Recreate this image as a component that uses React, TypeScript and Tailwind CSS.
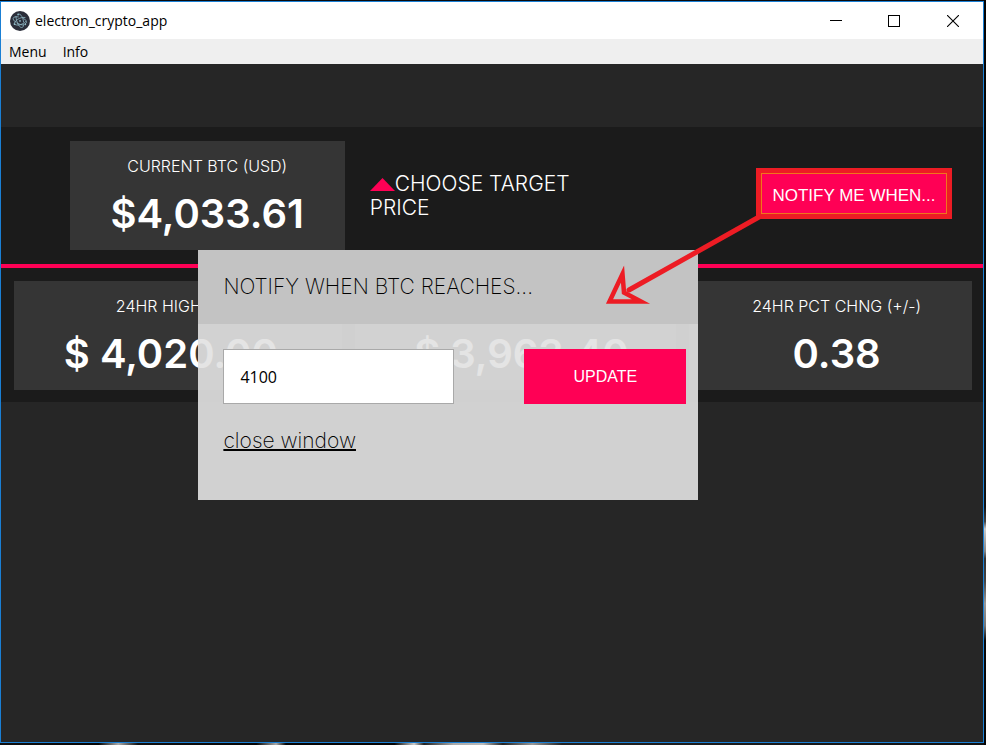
import { useState } from "react";

function ElectronIcon() {
  return (
    <svg viewBox="0 0 20 20" className="size-5" aria-hidden="true">
      <circle cx="10" cy="10" r="10" fill="#2b2e3a" />
      <g fill="none" stroke="#8fb8c4" strokeWidth="0.8" strokeLinecap="round">
        <path d="M8.300 5.900C5.700 5.500 3.700 5.900 3.200 7C2.700 8.100 3.800 9.800 6 11.400" />
        <path d="M7.300 12.200C9.200 13.200 11.300 13.900 13 14.100" />
        <path d="M13 6.800C15.600 8.500 17 10.500 16.400 11.800C16.200 12.200 15.900 12.500 15.400 12.700" />
        <path d="M15 6.500C13.500 6.200 11.500 6.500 9.400 7.400C6.200 8.800 4.300 11 4.200 12.600" />
        <path d="M5.400 13.700C6.900 14.400 9.400 14.200 12 13.100C13.700 12.400 15 11.400 15.900 10.400" />
        <path d="M6 5.400C6 8 6.900 11.600 8.600 14.200C9.800 16 11.200 16.900 12.300 16.400C13.200 16 13.700 14.800 13.800 13.200" />
        <path d="M13.600 11C13.300 8.400 12.300 5.800 11 4.200C10.300 3.400 9.600 3 8.900 3" />
      </g>
      <g fill="#8fb8c4">
        <circle cx="10" cy="9.900" r="0.900" />
        <circle cx="4.600" cy="13.200" r="0.900" />
        <circle cx="15.300" cy="13.300" r="0.900" />
        <circle cx="8.100" cy="3.500" r="0.900" />
      </g>
    </svg>
  );
}

function TitleBar() {
  return (
    <header className="flex h-[37px] items-center bg-white pl-[9px] font-['Open_Sans',sans-serif] text-sm text-black">
      <ElectronIcon />
      <h1 className="ml-[5px]">electron_crypto_app</h1>
      <div className="ml-auto flex h-full">
        <button aria-label="Minimize" className="flex w-[58px] items-center justify-center">
          <svg width="12" height="12" shapeRendering="crispEdges">
            <path d="M0 5.5h12" stroke="#000" />
          </svg>
        </button>
        <button aria-label="Maximize" className="flex w-[58px] items-center justify-center">
          <svg width="12" height="12" shapeRendering="crispEdges">
            <rect x="0.5" y="0.5" width="11" height="11" fill="none" stroke="#000" />
          </svg>
        </button>
        <button aria-label="Close" className="flex w-[60px] items-center justify-center">
          <svg width="12" height="12">
            <path d="M0 0L12 12M12 0L0 12" stroke="#000" strokeWidth="1.1" />
          </svg>
        </button>
      </div>
    </header>
  );
}

function MenuBar() {
  return (
    <nav className="flex h-[25px] items-center gap-4 bg-[#efefef] pl-2 font-['Open_Sans',sans-serif] text-sm text-black">
      <button>Menu</button>
      <button>Info</button>
    </nav>
  );
}

type PriceCardProps = { label: string; value: string; className: string; labelClass?: string };

function PriceCard({ label, value, className, labelClass = "" }: PriceCardProps) {
  return (
    <section className={`bg-[#353535] pt-[13px] text-center text-white ${className}`}>
      <h2 className={`leading-6 font-light whitespace-nowrap ${labelClass}`}>{label}</h2>
      <p className="text-[40px] leading-[72px] font-semibold whitespace-nowrap">{value}</p>
    </section>
  );
}

function NotifyDialog({ onClose }: { onClose: () => void }) {
  const [price, setPrice] = useState("4100");
  return (
    <div
      role="dialog"
      aria-labelledby="notify-title"
      className="absolute top-[186px] left-[20.1%] h-[250px] w-[500px] bg-[rgba(225,225,225,0.915)] text-[21px] font-extralight text-black"
    >
      <h2 id="notify-title" className="bg-[#c3c3c3] px-[25px] py-[25px] leading-6">
        <label htmlFor="target-price">NOTIFY WHEN BTC REACHES...</label>
      </h2>
      <div className="flex justify-between pt-[25px] pr-3 pl-[25px]">
        <input
          id="target-price"
          value={price}
          onChange={(e) => setPrice(e.target.value)}
          className="h-[55px] w-[231px] border border-[#a9a9a9] bg-white px-4 font-['Open_Sans',sans-serif] text-base font-normal"
        />
        <button className="h-[55px] w-[162px] bg-[#ff0055] font-['Liberation_Sans',Arial,sans-serif] text-base font-normal text-white">
          UPDATE
        </button>
      </div>
      <a
        href="#close"
        onClick={(e) => {
          e.preventDefault();
          onClose();
        }}
        className="mt-[25px] ml-[25px] inline-block leading-6 underline decoration-2"
      >
        close window
      </a>
    </div>
  );
}

function CalloutArrow() {
  return (
    <svg
      viewBox="0 0 160 96"
      className="pointer-events-none absolute top-[150px] right-[220px] h-24 w-40"
      fill="none"
      stroke="#ed1c24"
      aria-hidden="true"
    >
      <path d="M156 3L26 76" strokeWidth="5" strokeLinecap="round" />
      <path d="M19.500 60L6.500 87.500H38L21 78.500Z" strokeWidth="4.500" strokeMiterlimit="6" />
    </svg>
  );
}

export default function App() {
  const [open, setOpen] = useState(true);
  return (
    <div className="relative flex min-h-screen flex-col bg-[#0a0a0c] pt-px pr-0.5 pb-0.5">
      <div className="absolute right-0 bottom-0 left-0 h-0.5 bg-[linear-gradient(90deg,#111_0,#050505_10%,#aaa_12%,#111_14%,#050505_26%,#aaa_28%,#050505_29%,#050505_40%,#ccc_42%,#222_43%,#aaa_46%,#bbb_49%,#222_51%,#999_54%,#222_57%,#111_100%)]" />
      <div className="absolute top-0 right-0 bottom-0 w-0.5 bg-[linear-gradient(180deg,#030303_0,#111_68%,#444_70%,#ccc_71%,#888_74%,#333_75%,#444_78%,#999_81%,#777_84%,#080808_86%,#050505_100%)]" />
      <div className="relative flex flex-1 flex-col border border-[#1a7fd4] bg-[#262626]">
        <TitleBar />
        <MenuBar />
        <main className="relative flex-1 pt-[63px] font-[Inter,sans-serif]">
          <div className="flex items-start border-b-4 border-[#ff0055] bg-[#1b1b1b] py-3.5 pl-[7%]">
            <PriceCard label="CURRENT BTC (USD)" value="$4,033.61" className="w-[275px]" />
            <p className="mt-[31px] ml-[25px] w-56 text-[21px] leading-6 font-light text-white">
              <svg width="25" height="13" className="inline-block align-baseline" aria-hidden="true">
                <path d="M0 13L12.500 0L25 13Z" fill="#ff0055" />
              </svg>
              CHOOSE TARGET PRICE
            </p>
            <button
              onClick={() => setOpen(true)}
              className="mt-8 mr-9 ml-auto h-[41px] w-[186px] border border-[#f0761c] bg-[#ff0055] pt-1 font-['Liberation_Sans',Arial,sans-serif] text-[17px] whitespace-nowrap text-white ring-5 ring-[#ed1c24]"
            >
              NOTIFY ME WHEN...
            </button>
          </div>
          <div className="grid grid-cols-[328fr_322fr_283fr] gap-[13px] bg-[#1b1b1b] pt-[13px] pr-[11px] pb-3 pl-[13px]">
            <PriceCard label="24HR HIGH" value="$ 4,020.00" className="pr-3.5" labelClass="pr-6" />
            <PriceCard label="24HR LOW" value="$ 3,963.40" className="pl-3" />
            <PriceCard label="24HR PCT CHNG (+/-)" value="0.38" className="pl-3" />
          </div>
          {open && <NotifyDialog onClose={() => setOpen(false)} />}
          {open && <CalloutArrow />}
        </main>
      </div>
    </div>
  );
}
